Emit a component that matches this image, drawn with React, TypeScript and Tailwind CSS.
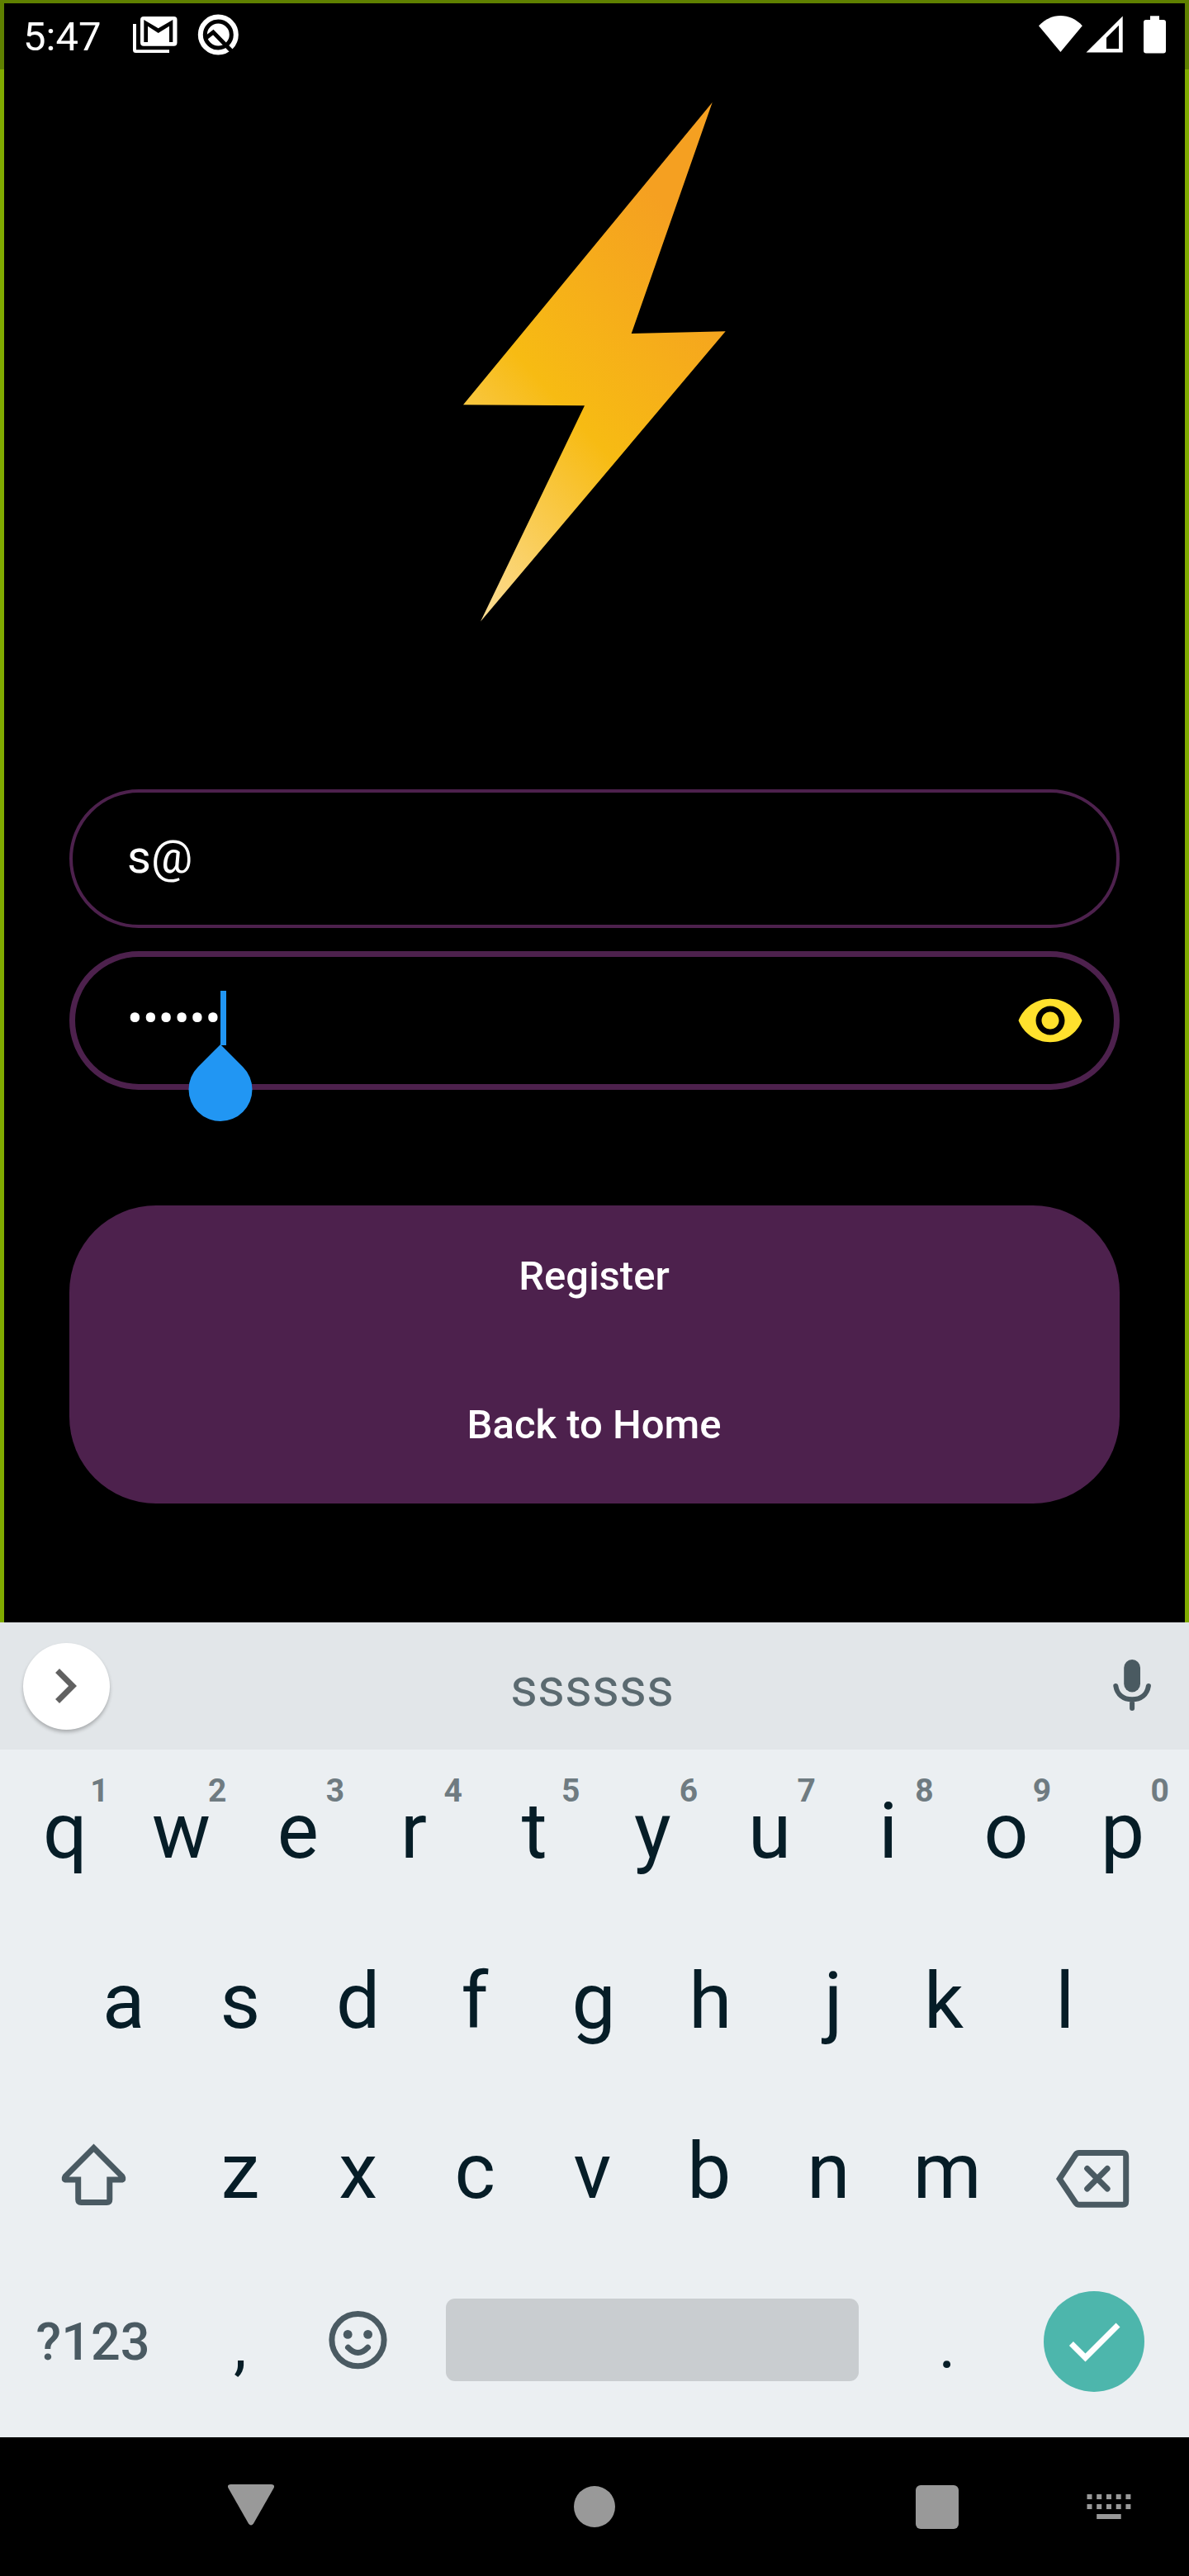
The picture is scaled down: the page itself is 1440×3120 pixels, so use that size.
import React from "react";

const topRow = ["q", "w", "e", "r", "t", "y", "u", "i", "o", "p"];
const hints = ["1", "2", "3", "4", "5", "6", "7", "8", "9", "0"];
const homeRow = ["a", "s", "d", "f", "g", "h", "j", "k", "l"];
const bottomRow = ["z", "x", "c", "v", "b", "n", "m"];

const opticalShift: Record<string, number> = {
  q: 2,
  e: -1.5,
  r: -4,
  t: -0.5,
  u: -1,
  p: -1.5,
  a: 1.5,
  f: -1.5,
  h: -1.5,
  j: 5,
  k: -4,
  c: -1,
  v: -1.5,
  b: -3,
  n: -1,
};

function Key({ label, hint }: { label: string; hint?: string }) {
  return (
    <div className="relative flex h-full w-[142.7px] items-center justify-center text-[94.5px] leading-none text-[#061d27]">
      <span style={{ transform: `translateX(${opticalShift[label] ?? 0}px)` }}>{label}</span>
      {hint && (
        <span className="absolute top-[31px] left-[95px] w-[40px] text-center text-[39px] leading-[39px] font-bold text-[#6f7b81]">
          {hint}
        </span>
      )}
    </div>
  );
}

function PunctuationKey({ label }: { label: string }) {
  return (
    <div className="flex w-[142.7px] justify-center pt-[9px] text-[80px] leading-none text-[#061d27]">{label}</div>
  );
}

function StatusBar() {
  return (
    <header className="flex h-[84px] items-center justify-between border-x-[5px] border-t-[4px] border-[#5f8000] pr-[23px] pb-[4px] pl-[23px] text-white">
      <div className="flex items-center">
        <span className="w-[133px] pt-[5px] text-[49px] leading-[49px]">5:47</span>
        <svg width="54" height="56" viewBox="0 0 54 56">
          <path d="M0 15h4v31.3h40V50H3.500Q0 50 0 46.500z" fill="#fff" />
          <rect x="9" y="6" width="44.500" height="35.700" rx="4" fill="#fff" />
          <path d="M13.300 10L30.700 20.300L48.300 10V37H44V17.700L30.700 26L18 17.700V37H13.300z" fill="#000" />
        </svg>
        <svg className="ml-[24px]" width="52" height="56" viewBox="0 0 52 56">
          <circle cx="25.300" cy="28" r="21.500" fill="none" stroke="#fff" strokeWidth="6" />
          <circle cx="25.300" cy="28" r="13.500" fill="#fff" />
          <path d="M11 31.500L19.300 25L42 48.500" fill="none" stroke="#000" strokeWidth="5" />
        </svg>
      </div>
      <div className="flex items-center">
        <svg width="53" height="56" viewBox="0 0 53 56">
          <path d="M26.400 49L0 17.300C14.500 1 38.300 1 52.800 17.300z" fill="#fff" />
        </svg>
        <svg className="ml-[4px]" width="45" height="56" viewBox="0 0 45 56">
          <path d="M.5 49.500H44.700V5.500zM25 31.800V45H40V16.800z" fill="#fff" fillRule="evenodd" />
        </svg>
        <svg className="ml-[25px]" width="27" height="56" viewBox="0 0 27 56">
          <rect y="10" width="27" height="40.500" rx="3" fill="#fff" />
          <rect x="8" y="5.300" width="11" height="6" fill="#fff" />
        </svg>
      </div>
    </header>
  );
}

function Bolt() {
  return (
    <svg width="320" height="632" viewBox="560 122 320 632">
      <defs>
        <linearGradient id="bolt" gradientUnits="userSpaceOnUse" x1="582" y1="752" x2="1048" y2="327">
          <stop offset="0" stopColor="#fcdd95" />
          <stop offset=".395" stopColor="#f7bb13" />
          <stop offset=".8" stopColor="#f5a021" />
          <stop offset="1" stopColor="#f5a021" />
        </linearGradient>
      </defs>
      <path d="M862.700 124L764.700 404L878.700 401.300L582 752.700L708 491.300L561 490.300z" fill="url(#bolt)" />
    </svg>
  );
}

function LoginForm() {
  return (
    <main className="flex h-[1881px] flex-col items-center border-x-[5px] border-[#80aa00] px-[79px] pt-[38px]">
      <Bolt />
      <div className="mt-[202px] flex h-[168px] w-full items-center rounded-full border-[4px] border-[#4d214d] pb-[5px] pl-[66px] text-[56px] leading-[66px] text-white">
        s@
      </div>
      <div className="mt-[28px] flex h-[168px] w-full items-center justify-between rounded-full border-[7px] border-[#4d214d] pr-[35px] pl-[63px]">
        <div className="relative mb-[6px] flex h-[66px] w-[120px] items-center border-r-[7px] border-[#2196f3] pt-[2px] text-[56px] leading-[64px] text-white">
          ••••••
          <svg className="absolute top-[65px] -right-[39px]" width="78" height="93" viewBox="0 0 78 93">
            <path d="M39 0L66.200 27.200A38.500 38.500 0 1 1 11.800 27.200z" fill="#2196f3" />
          </svg>
        </div>
        <svg width="84" height="84" viewBox="0 0 24 24" fill="#ffe12d">
          <path d="M12 4.500C7 4.500 2.730 7.610 1 12c1.730 4.390 6 7.500 11 7.500s9.270-3.110 11-7.500c-1.730-4.390-6-7.500-11-7.500zM12 17c-2.760 0-5-2.240-5-5s2.240-5 5-5 5 2.240 5 5-2.240 5-5 5zm0-8c-1.660 0-3 1.340-3 3s1.340 3 3 3 3-1.340 3-3-1.340-3-3-3z" />
        </svg>
      </div>
      <div className="mt-[140px] flex h-[361px] w-full flex-col rounded-[105px] bg-[#4d214d] text-[49px] leading-[60px] font-medium text-white">
        <button className="flex h-[180px] items-center justify-center pr-[1px] pb-[8px]">Register</button>
        <button className="flex h-[180px] items-center justify-center pr-[1px] pb-[8px]">Back to Home</button>
      </div>
    </main>
  );
}

function Keyboard() {
  return (
    <section className="flex h-[987px] flex-col bg-[#ebeff2]">
      <div className="flex h-[154px] items-center justify-between bg-[#e2e6e9] pr-[45px] pl-[28px]">
        <div className="flex size-[105px] items-center justify-center rounded-full bg-white pr-[3px] shadow-[0_3px_4px_rgba(0,0,0,0.25)]">
          <svg width="84" height="84" viewBox="0 0 24 24" fill="#616161">
            <path d="M10 6L8.590 7.410 13.170 12l-4.580 4.590L10 18l6-6z" />
          </svg>
        </div>
        <span className="ml-[14px] pt-[6px] text-[64px] leading-[70px] text-[#5b6a70]">ssssss</span>
        <svg className="mb-[3px] ml-[60px]" width="48" height="66" viewBox="0 0 48 66">
          <rect x="14.200" y="2" width="19.800" height="39.500" rx="9.900" fill="#4a5a61" />
          <path d="M4.300 34C6 44.500 13.500 50.300 24.100 50.300S42.200 44.500 43.900 34M24.100 51V61" fill="none" stroke="#4a5a61" strokeWidth="6" strokeLinecap="round" />
        </svg>
      </div>
      <div className="flex h-[202px] justify-center pr-[2px] pb-[3px]">
        {topRow.map((letter, i) => (
          <Key key={letter} label={letter} hint={hints[i]} />
        ))}
      </div>
      <div className="flex h-[206px] justify-center pt-[1px] pr-[2px]">
        {homeRow.map((letter) => (
          <Key key={letter} label={letter} />
        ))}
      </div>
      <div className="flex h-[206px] items-center justify-center pt-[1px] pr-[2px]">
        <div className="flex w-[214px] justify-center">
          <svg width="88" height="88" viewBox="0 0 88 88">
            <path
              d="M44.500 14.500L10.100 49Q7.500 53 11.500 53H25.700V77q0 3.500 3.500 3.500H60.300q3.500 0 3.500-3.500V53H77.500Q81.500 53 78.900 49z"
              fill="none"
              stroke="#4a5a62"
              strokeWidth="7"
            />
          </svg>
        </div>
        {bottomRow.map((letter) => (
          <Key key={letter} label={letter} />
        ))}
        <div className="flex w-[214px] justify-center">
          <svg width="96" height="88" viewBox="0 0 96 88" fill="none" stroke="#4a5a62" strokeWidth="7">
            <path d="M6.200 52L25.500 23Q27 20.500 30 20.500H82.700q4 0 4 4V79.200q0 4-4 4H30Q27 83.200 25.500 80.700z" />
            <path d="M39.700 39.500L64.100 64M64.100 39.500L39.700 64" strokeLinecap="round" />
          </svg>
        </div>
      </div>
      <div className="flex h-[206px] items-center justify-center pr-[2px]">
        <div className="flex w-[214px] justify-center text-[63px] leading-none font-medium text-[#4a5a62]">?123</div>
        <PunctuationKey label="," />
        <div className="flex w-[142.7px] justify-center">
          <svg width="84" height="84" viewBox="0 0 84 84" fill="#4a5a62">
            <circle cx="41.500" cy="40.100" r="31.600" fill="none" stroke="#4a5a62" strokeWidth="7" />
            <circle cx="29.200" cy="33.400" r="5.400" />
            <circle cx="53.600" cy="33.400" r="5.400" />
            <path d="M29.500 49.200Q41.500 62 53.500 49.200" fill="none" stroke="#4a5a62" strokeWidth="7" strokeLinecap="round" />
          </svg>
        </div>
        <div className="flex w-[570.800px] justify-center pb-[4px]">
          <div className="h-[100px] w-[500px] rounded-[11px] bg-[#c9cdd0]" />
        </div>
        <PunctuationKey label="." />
        <div className="flex w-[214px] justify-center">
          <div className="flex size-[122px] items-center justify-center rounded-full bg-[#4db6ac]">
            <svg width="84" height="84" viewBox="0 0 24 24" fill="#fff">
              <path d="M9 16.170L4.830 12l-1.420 1.410L9 19 21 7l-1.410-1.410z" />
            </svg>
          </div>
        </div>
      </div>
    </section>
  );
}

function NavBar() {
  return (
    <nav className="flex h-[168px] items-center bg-black pl-[276px]">
      <svg className="mb-[5px]" width="56" height="50" viewBox="0 0 56 50" fill="#999">
        <path d="M3.500 0H52.500Q57.500 0 55.500 4.500L31 47.500Q28 51.500 25 47.500L.5 4.500Q-1.500 0 3.500 0z" />
      </svg>
      <div className="ml-[363px] size-[50px] rounded-full bg-[#999]" />
      <div className="ml-[364px] h-[53px] w-[52px] rounded-[6px] bg-[#999]" />
      <svg className="ml-[155px]" width="56" height="30" viewBox="0 0 56 30" fill="#999">
        <path d="M.5 0h6v6h-6zM12.200 0h6v6h-6zM24 0h6v6h-6zM35.700 0h6v6h-6zM47.400 0h6v6h-6zM.5 12h6v6h-6zM12.200 12h6v6h-6zM24 12h6v6h-6zM35.700 12h6v6h-6zM47.400 12h6v6h-6zM12.200 24h29.500v6H12.200z" />
      </svg>
    </nav>
  );
}

export default function App() {
  return (
    <div className="flex h-[3120px] w-[1440px] flex-col overflow-hidden bg-black font-['Roboto',sans-serif]">
      <StatusBar />
      <LoginForm />
      <Keyboard />
      <NavBar />
    </div>
  );
}
